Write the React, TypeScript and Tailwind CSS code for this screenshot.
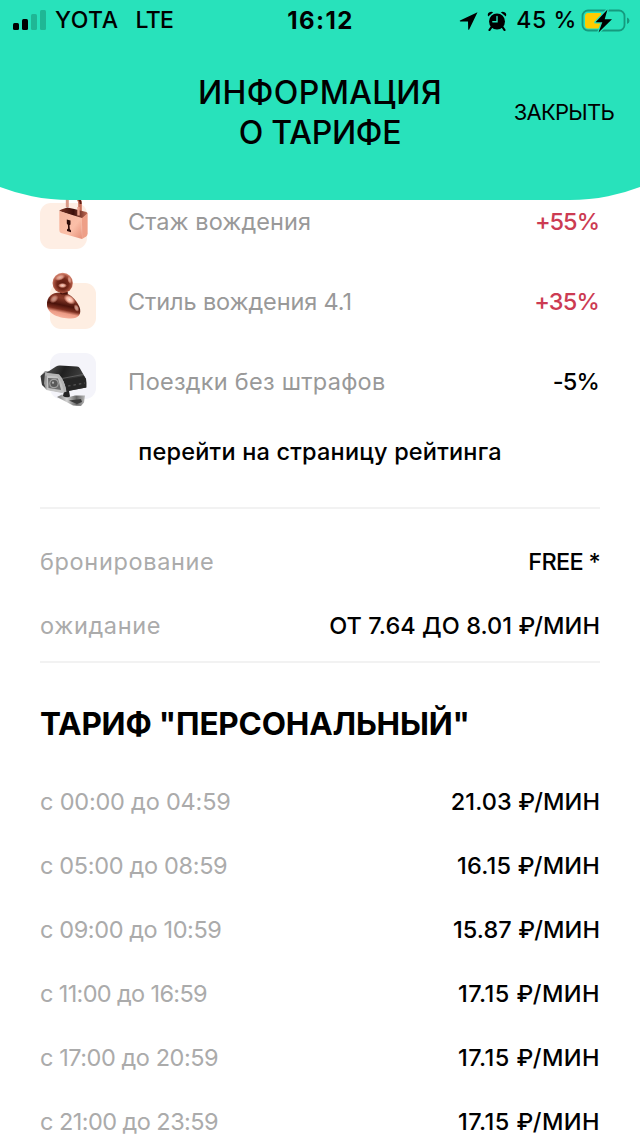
import React from 'react';

type RatingRow = {
  label: string;
  labelClass: string;
  value: string;
  valueClass: string;
  icon: React.ReactNode;
};

type PriceRow = {
  label: string;
  labelClass: string;
  value: string;
  valueClass: string;
};

const LockIcon = () => (
  <svg viewBox="0 0 56 56" className="h-14 w-14 shrink-0">
    <defs>
      <linearGradient id="lockFront" x1="0" y1="0" x2="1" y2="1">
        <stop offset="0" stopColor="#f5b49c" />
        <stop offset="0.6" stopColor="#fbbfa8" />
        <stop offset="1" stopColor="#e58f78" />
      </linearGradient>
      <linearGradient id="lockTop" x1="0" y1="0" x2="1" y2="0">
        <stop offset="0" stopColor="#7a3325" />
        <stop offset="0.5" stopColor="#3c0f0a" />
        <stop offset="1" stopColor="#c56d57" />
      </linearGradient>
    </defs>
    <rect x="0" y="9" width="47" height="46" rx="11" fill="#feeee4" />
    <path d="M27.300 3v10" stroke="#d99a88" strokeWidth="3" />
    <path d="M35 3q5 1 5 7v10" fill="none" stroke="#c9725c" strokeWidth="3.600" />
    <path d="M37 4q4 2 3.600 6" fill="none" stroke="#5c1d13" strokeWidth="2" />
    <path d="M19.300 17q0-1 2-1.500l6-2 7 1.500 12 3q2 .8 1 2l-5.500 5z" fill="url(#lockTop)" />
    <path d="M19.300 17l22.700 7q-.4 9 0 21l-21-6q-1.700-.6-1.700-3z" fill="url(#lockFront)" />
    <path d="M42 24l5.600-4.500v20q0 2-1.500 3l-4 2.600z" fill="#ee9f87" />
    <path d="M38.500 13v8.500" stroke="#e9a08a" strokeWidth="2.400" />
    <path d="M26.800 25.500l3.700 1v4l-1 .8.300 3.700 1.200 1.500v1.700l-4-1.200v-1.600l1.100-1-.2-3.500-1.100-1.400z" fill="#2b0907" />
  </svg>
);

const PersonIcon = () => (
  <svg viewBox="0 0 56 56" className="h-14 w-14 shrink-0 overflow-visible">
    <defs>
      <radialGradient id="copperHead" cx="0.5" cy="0.55" r="0.56">
        <stop offset="0" stopColor="#5a1a10" />
        <stop offset="0.5" stopColor="#74281a" />
        <stop offset="0.78" stopColor="#a8523f" />
        <stop offset="1" stopColor="#e79c88" />
      </radialGradient>
      <linearGradient id="copperBody" x1="0.65" y1="0" x2="0.38" y2="1">
        <stop offset="0" stopColor="#6b2416" />
        <stop offset="0.25" stopColor="#8b3c2c" />
        <stop offset="0.5" stopColor="#4a120a" />
        <stop offset="0.66" stopColor="#7e2f20" />
        <stop offset="0.78" stopColor="#ec9a84" />
        <stop offset="1" stopColor="#fab9a5" />
      </linearGradient>
      <radialGradient id="copperShine">
        <stop offset="0" stopColor="#ffe3d8" />
        <stop offset="0.5" stopColor="#f7b39f" />
        <stop offset="1" stopColor="#f7b39f" stopOpacity="0" />
      </radialGradient>
    </defs>
    <rect x="10" y="9" width="46" height="46" rx="11" fill="#feeee2" />
    <path d="M7 31C6.500 23 12 18.500 20 18.500c9 0 16 6 19.500 14.500 2.500 7-1 11.500-8.500 11.500C19 44.500 7.500 40 7 31z" fill="url(#copperBody)" />
    <ellipse cx="14" cy="25" rx="5" ry="3.500" fill="url(#copperShine)" opacity="0.6" transform="rotate(-40 14 25)" />
    <ellipse cx="29.500" cy="25.500" rx="6.500" ry="4.200" fill="url(#copperShine)" transform="rotate(35 29.500 25.500)" />
    <ellipse cx="36.500" cy="34" rx="2.500" ry="4" fill="url(#copperShine)" opacity="0.7" transform="rotate(-25 36.500 34)" />
    <ellipse cx="24" cy="19" rx="4" ry="1.500" fill="#4a120a" />
    <circle cx="22.700" cy="9" r="10.200" fill="url(#copperHead)" />
    <ellipse cx="20" cy="3.500" rx="5.500" ry="3" fill="url(#copperShine)" opacity="0.75" transform="rotate(-20 20 3.500)" />
    <ellipse cx="22.500" cy="11.500" rx="4.500" ry="2.600" fill="url(#copperShine)" opacity="0.9" />
    <ellipse cx="29.500" cy="6" rx="2" ry="4" fill="url(#copperShine)" opacity="0.6" transform="rotate(-15 29.500 6)" />
  </svg>
);

const CameraIcon = () => (
  <svg viewBox="0 0 56 56" className="h-14 w-14 shrink-0 overflow-visible">
    <defs>
      <linearGradient id="cameraTop" x1="0" y1="0" x2="1" y2="0.3">
        <stop offset="0" stopColor="#5a5a5a" />
        <stop offset="0.45" stopColor="#202020" />
        <stop offset="1" stopColor="#444444" />
      </linearGradient>
      <linearGradient id="cameraArm" x1="0" y1="0" x2="1" y2="0">
        <stop offset="0" stopColor="#777777" />
        <stop offset="0.35" stopColor="#d2d2d2" />
        <stop offset="0.7" stopColor="#666666" />
        <stop offset="1" stopColor="#b8b8b8" />
      </linearGradient>
    </defs>
    <rect x="10" y="-1" width="46" height="46" rx="11" fill="#f4f4fa" />
    <path d="M17 43l5-2.500 7 2.500 6-1.500h10l-1 7-3 3.500-8-.5z" fill="url(#cameraArm)" />
    <path d="M29 46.500l12-1.500 1 3-5 2z" fill="#3b3b3b" />
    <path d="M24 37l5 0 1 5.500q-4 2-7-.6z" fill="#242424" />
    <path d="M1 21.500L5 17 20 18l2 20.500-16-3-4-5z" fill="#9b9b9b" />
    <path d="M.5 22l4.500-3.500-1 11 1.500 4.500-3.500-3z" fill="#3c3c3c" />
    <path d="M7 20.500l13 1.500 5 16-3 1-15.500-3z" fill="#c4c4c4" />
    <path d="M8 24l10 .5 3 11.500-12.500-2z" fill="#6c6c6c" />
    <circle cx="14" cy="29.500" r="4.800" fill="#a2a2a2" />
    <circle cx="14" cy="29.500" r="3.600" fill="#5a5a5a" />
    <circle cx="13" cy="28.700" r="1.100" fill="#b5b5b5" />
    <path d="M6 19l10-6.500q2-1 4-.9l17 .9q2 .2 3 2L46 25q.8 4 .3 8.500L26 37.500Q25 27 19 21z" fill="url(#cameraTop)" />
    <path d="M5.500 18.800L19 20.200q5.500 6 7.500 17.500l-2.500.6Q22 27 17 22.500l-12-1z" fill="#b4b4b4" />
    <path d="M24 26l20-4 2 3 .3 8.500-19 3.500z" fill="#262626" />
    <path d="M28 32l17-3" stroke="#575757" strokeWidth="1.200" strokeDasharray="2.500 3" />
    <path d="M22 24.500l21-4" stroke="#666666" strokeWidth="0.800" />
  </svg>
);

const SignalBars = () => (
  <svg viewBox="0 0 34 22" className="h-[22px] w-[34px]">
    <rect x="0" y="13" width="6" height="7" rx="1.500" fill="#000" />
    <rect x="9" y="9" width="6" height="11" rx="1.500" fill="#000" />
    <rect x="18" y="4" width="6" height="16" rx="1.500" fill="#1fb795" />
    <rect x="27" y="0" width="6" height="20" rx="1.500" fill="#1fb795" />
  </svg>
);

const AlarmClock = () => (
  <svg viewBox="0 0 20 20" className="ml-2 h-5 w-5">
    <path d="M1.200 5.600Q0 3 2 1.600T6.200 1.200zM18.800 5.600Q20 3 18 1.600t-4.200-.4z" fill="#000" />
    <path d="M4.500 16l-2 3M15.500 16l2 3" stroke="#000" strokeWidth="2.200" strokeLinecap="round" />
    <circle cx="10" cy="10.500" r="8" fill="#000" />
    <path d="M10 5.500v5.300H5.800" fill="none" stroke="#28e2bb" strokeWidth="1.400" strokeLinecap="round" />
  </svg>
);

const Battery = () => (
  <svg viewBox="0 0 50 24" className="ml-1 h-6 w-[50px]">
    <rect x="1.500" y="1.500" width="42" height="20" rx="5.500" fill="none" stroke="#159a7e" strokeWidth="1.800" />
    <path d="M46 8.500q2.500 1 2.500 3.200T46 15z" fill="#159a7e" />
    <path d="M7 4h13v15.500H7Q4 19.500 4 16V7.500Q4 4 7 4z" fill="#ffcc00" />
    <path d="M26.500.5L14.500 13.300h6.800L17.500 23.500 31 10.200h-7.300z" fill="#000" stroke="#28e2bb" strokeWidth="2.600" strokeLinejoin="round" />
    <path d="M26.500.5L14.500 13.300h6.800L17.500 23.500 31 10.200h-7.300z" fill="#000" />
  </svg>
);

const ratingRows: RatingRow[] = [
  { label: 'Стаж вождения', labelClass: 'tracking-[0.08px]', value: '+55%', valueClass: 'tracking-[-1px] text-[#cc3b52]', icon: <LockIcon /> },
  { label: 'Стиль вождения 4.1', labelClass: 'tracking-[-0.12px]', value: '+35%', valueClass: 'tracking-[-0.8px] text-[#cc3b52]', icon: <PersonIcon /> },
  { label: 'Поездки без штрафов', labelClass: 'tracking-[0.25px]', value: '-5%', valueClass: 'tracking-[-0.8px] text-black', icon: <CameraIcon /> }
];

const serviceRows: PriceRow[] = [
  { label: 'бронирование', labelClass: 'tracking-[0.65px]', value: 'FREE *', valueClass: 'tracking-[-0.7px]' },
  { label: 'ожидание', labelClass: 'tracking-[0.65px]', value: 'ОТ 7.64 ДО 8.01 ₽/МИН', valueClass: 'tracking-[0.06px]' }
];

const tariffRows: PriceRow[] = [
  { label: 'с 00:00 до 04:59', labelClass: 'tracking-[-0.2px]', value: '21.03 ₽/МИН', valueClass: 'tracking-[0.1px]' },
  { label: 'с 05:00 до 08:59', labelClass: 'tracking-[-0.33px]', value: '16.15 ₽/МИН', valueClass: 'tracking-[0.2px]' },
  { label: 'с 09:00 до 10:59', labelClass: 'tracking-[-0.4px]', value: '15.87 ₽/МИН', valueClass: 'tracking-[0.1px]' },
  { label: 'с 11:00 до 16:59', labelClass: 'tracking-[-0.65px]', value: '17.15 ₽/МИН', valueClass: 'tracking-[0.45px]' },
  { label: 'с 17:00 до 20:59', labelClass: 'tracking-[-0.45px]', value: '17.15 ₽/МИН', valueClass: 'tracking-[0.45px]' },
  { label: 'с 21:00 до 23:59', labelClass: 'tracking-[-0.55px]', value: '17.15 ₽/МИН', valueClass: 'tracking-[0.45px]' }
];

const PriceLine = ({ row }: { row: PriceRow }) => (
  <div className="flex h-16 shrink-0 items-center justify-between">
    <span className={`text-[#ababab] ${row.labelClass}`}>{row.label}</span>
    <span className={`font-medium text-black ${row.valueClass}`}>{row.value}</span>
  </div>
);

const Header = () => (
  <header className="relative z-10 h-[200px] shrink-0">
    <div className="absolute inset-y-0 -right-[125px] -left-[125px] -z-10 rounded-b-[195px] bg-[#28e2bb]" />
    <div className="grid h-10 grid-cols-3 items-center pt-px text-[23px] font-medium">
      <div className="flex items-center pl-[13px]">
        <SignalBars />
        <span className="ml-2 tracking-[0.5px]">YOTA</span>
        <span className="ml-[17px] tracking-[-0.6px]">LTE</span>
      </div>
      <div className="pl-px text-center text-2xl font-bold tracking-[1.4px]">16:12</div>
      <div className="flex items-center justify-end pr-[9px]">
        <svg viewBox="0 0 20 20" className="h-5 w-5">
          <path d="M18.500 1.300L1 9.500q-.8.700.3.900l7.700.1.200 7.800q.3 1 1 .2z" fill="#000" />
        </svg>
        <AlarmClock />
        <span className="ml-[9px] tracking-[0.6px]">45 %</span>
        <Battery />
      </div>
    </div>
    <div className="grid grid-cols-[1fr_260px_1fr] items-center pt-[33px]">
      <h1 className="col-start-2 text-center text-[32px] leading-10 font-medium whitespace-nowrap">
        <span className="block tracking-[0.4px]">ИНФОРМАЦИЯ</span>
        <span className="block tracking-[-0.25px]">О ТАРИФЕ</span>
      </h1>
      <button className="pr-[26px] pb-0.5 text-right text-[22px] tracking-[-0.75px]">ЗАКРЫТЬ</button>
    </div>
  </header>
);

export default function App() {
  return (
    <div className="flex h-[1136px] w-[640px] flex-col overflow-hidden bg-white font-['Inter','Noto_Sans',sans-serif] text-black">
      <Header />
      <main className="-mt-[18px] flex shrink-0 flex-col px-10 text-[23.5px] whitespace-nowrap">
        {ratingRows.map((row) => (
          <div key={row.label} className="flex h-20 items-center">
            {row.icon}
            <span className={`ml-8 text-[#999999] ${row.labelClass}`}>{row.label}</span>
            <span className={`mr-px ml-auto font-medium ${row.valueClass}`}>{row.value}</span>
          </div>
        ))}
        <button className="h-[60px] text-center font-medium tracking-[0.2px]">
          <span>перейти на страницу рейтинга</span>
        </button>
        <hr className="mt-[25px] border-t-2 border-[#f2f2f2]" />
        <section className="mt-[21px]">
          {serviceRows.map((row) => (
            <PriceLine key={row.label} row={row} />
          ))}
        </section>
        <hr className="mt-[3px] border-t-2 border-[#f2f2f2]" />
        <h2 className="mt-[41px] text-[31.500px] leading-10 font-bold tracking-[-0.18px]">
          <span>ТАРИФ "ПЕРСОНАЛЬНЫЙ"</span>
        </h2>
        <section className="mt-[26px]">
          {tariffRows.map((row) => (
            <PriceLine key={row.label} row={row} />
          ))}
        </section>
      </main>
    </div>
  );
}
